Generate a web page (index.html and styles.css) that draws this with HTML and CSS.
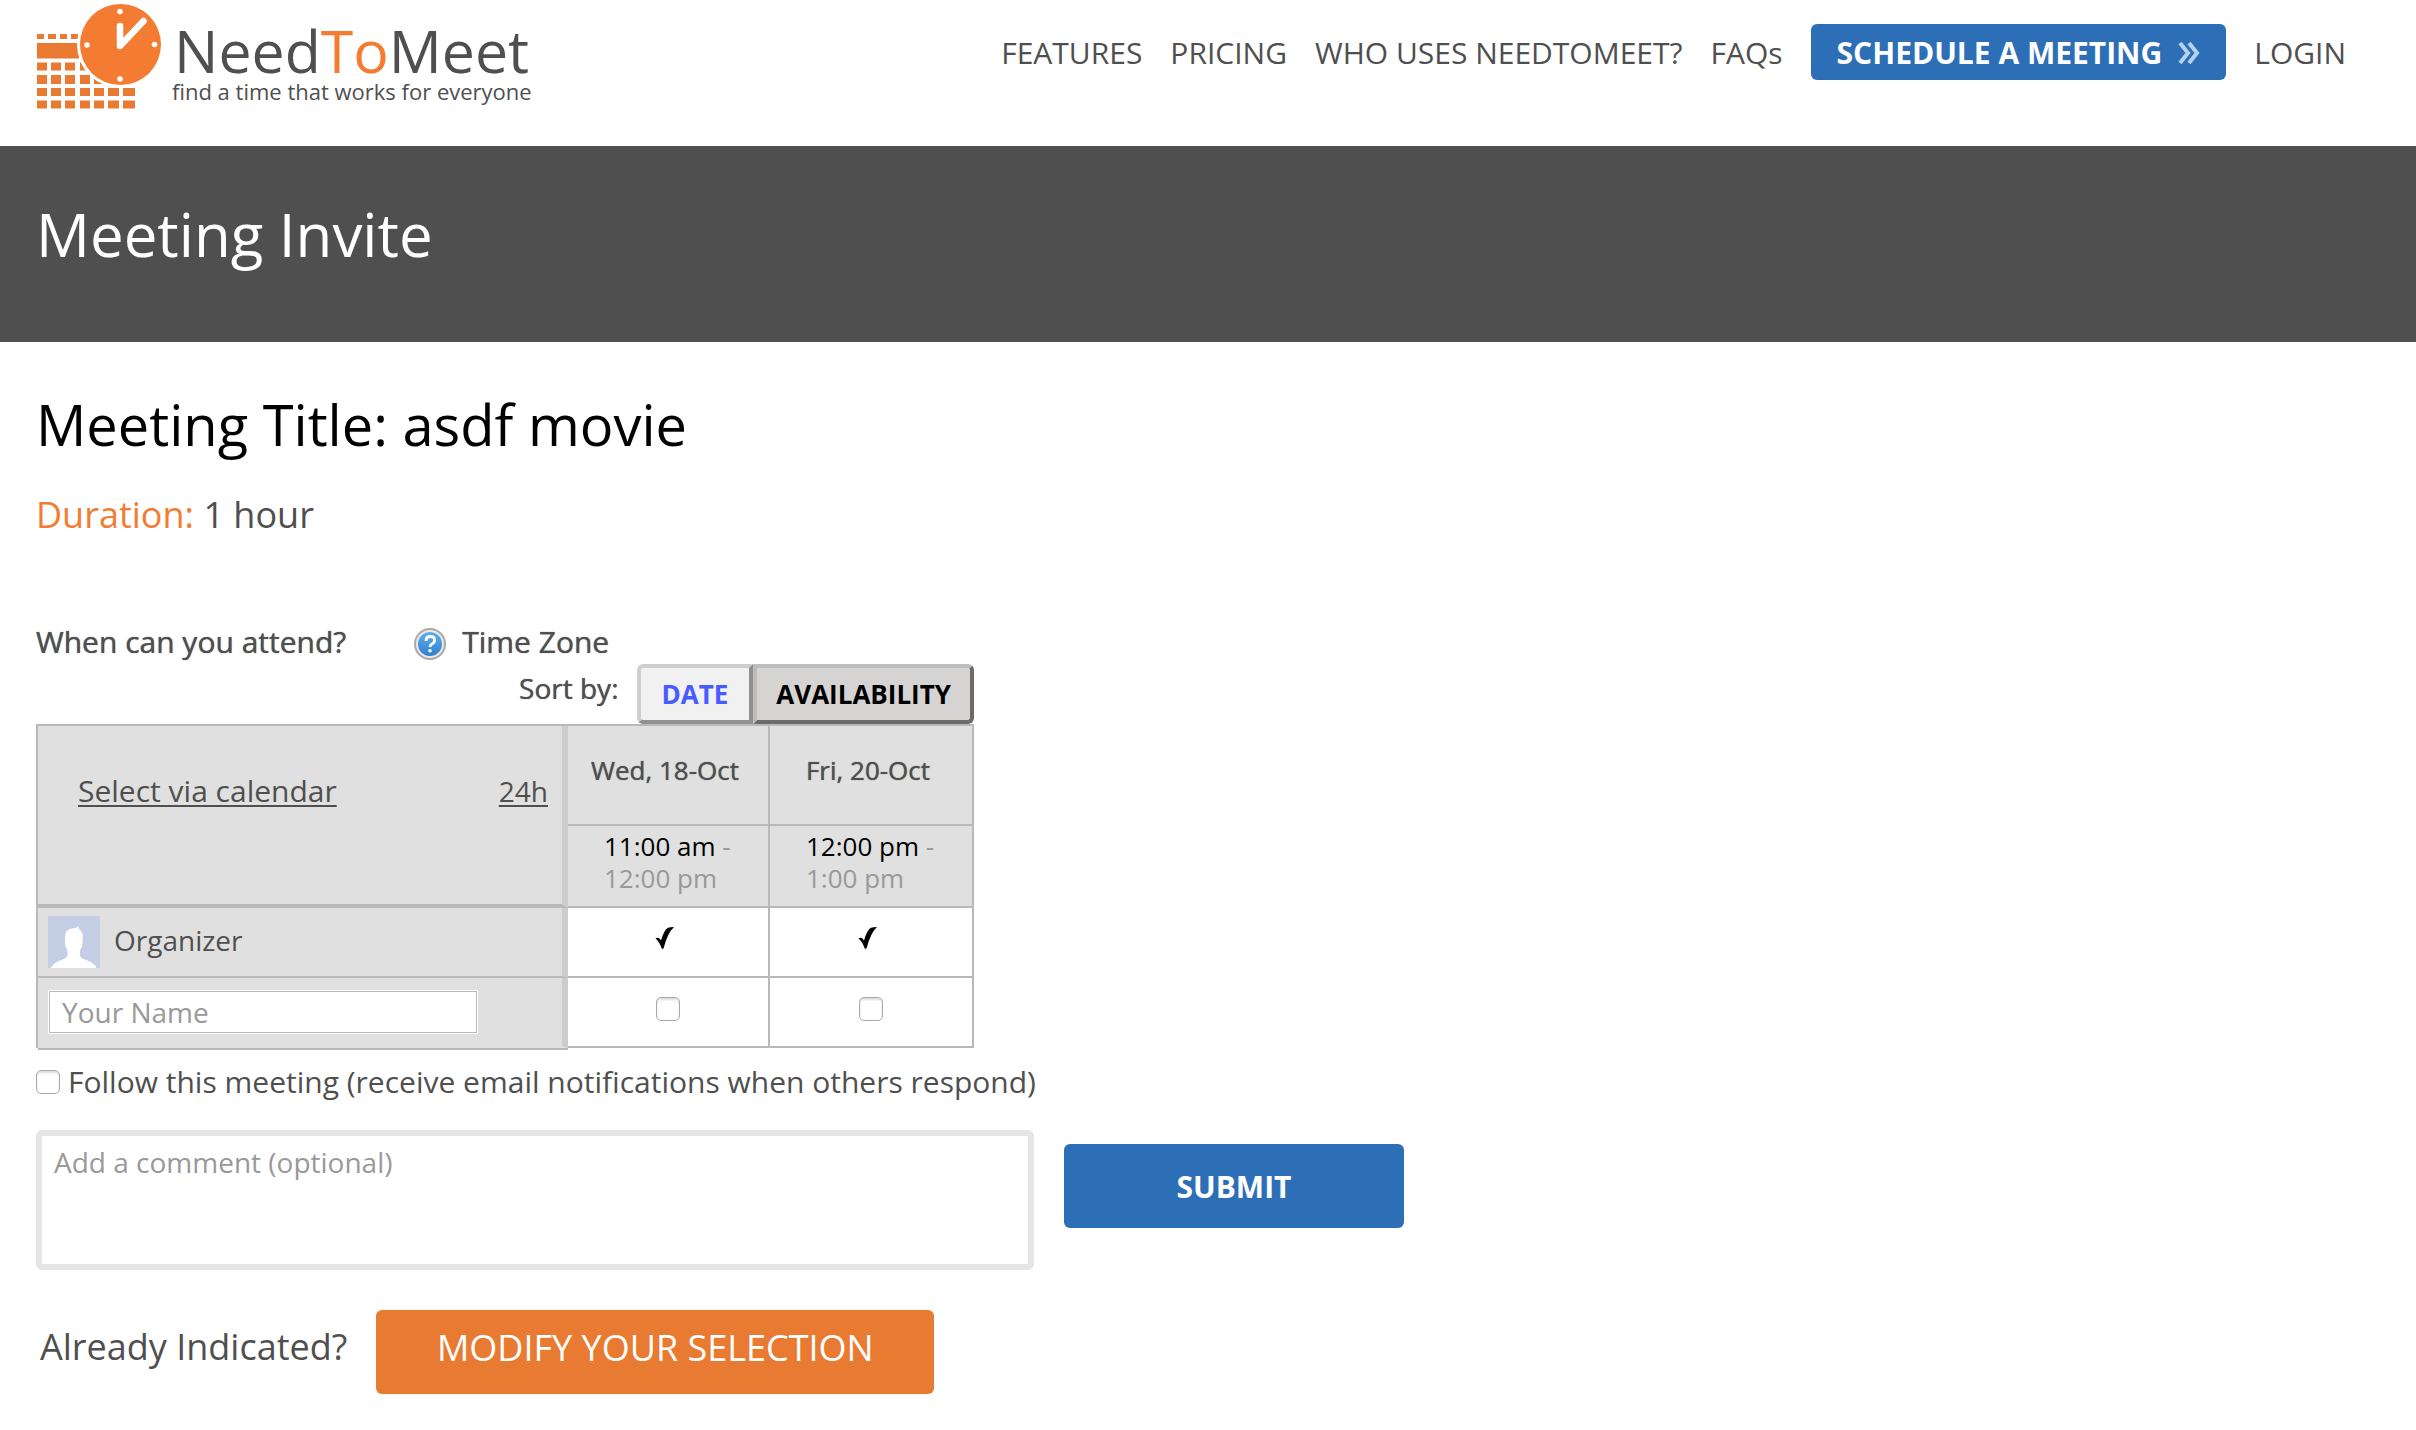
FILE: index.html
```html
<!DOCTYPE html>
<html lang="en">
<head>
<meta charset="utf-8">
<title>NeedToMeet - Meeting Invite</title>
<link rel="stylesheet" href="styles.css">
</head>
<body>
<header class="site-header">
  <a class="brand" href="#">
    <svg class="brand-mark" viewBox="0 0 126 106" aria-hidden="true">
      <g fill="#ea7a31">
        <path d="M1 30h7v5H1zM12 30h8v5h-8zM24 30h7v5h-7zM35 30h7v5h-7zM1 39h42v15.500H1z"/>
        <path d="M1 58.500h10v8H1zM15 58.500h10v8H15zM29 58.500h10v8H29zM44 58.500h10v8H44z"/>
        <path d="M1 71h10v9H1zM15 71h10v9H15zM29 71h10v9H29zM44 71h10v9H44zM58 71h10v9H58z"/>
        <path d="M1 84h10v8H1zM15 84h10v8H15zM29 84h10v8H29zM44 84h10v8H44zM58 84h10v8H58zM72 84h11v8H72zM87 84h12v8H87z"/>
        <path d="M1 96.500h10v8H1zM15 96.500h10v8H15zM29 96.500h10v8H29zM44 96.500h10v8H44zM58 96.500h10v8H58zM72 96.500h11v8H72zM87 96.500h12v8H87z"/>
      </g>
      <circle cx="84.500" cy="40.500" r="43.500" fill="#fff"/>
      <circle cx="84.500" cy="40.500" r="40.500" fill="#f37b32"/>
      <g fill="#fff"><circle cx="84" cy="7.500" r="2.800"/><circle cx="51" cy="41" r="2.800"/><circle cx="118.500" cy="40.500" r="2.800"/><circle cx="84" cy="75" r="2.800"/></g>
      <path d="M84 22v20l23.500-25" fill="none" stroke="#fff" stroke-width="6.500" stroke-linecap="round" stroke-linejoin="round"/>
    </svg>
    <span class="brand-text">
      <span class="brand-name">Need<span class="brand-accent">To</span>Meet</span>
      <span class="brand-tagline">find a time that works for everyone</span>
    </span>
  </a>
  <nav class="main-nav">
    <a href="#">FEATURES</a>
    <a href="#">PRICING</a>
    <a href="#">WHO USES NEEDTOMEET?</a>
    <a href="#">FAQs</a>
    <a class="schedule" href="#">SCHEDULE A MEETING
      <svg class="chevrons" viewBox="0 0 22 22" aria-hidden="true"><path d="M2 1l8 10-8 10M11 1l8 10-8 10" fill="none" stroke="#b9d0ea" stroke-width="4"/></svg>
    </a>
    <a href="#">LOGIN</a>
  </nav>
</header>
<div class="banner"><h1>Meeting Invite</h1></div>
<main class="content">
  <h2>Meeting Title: asdf movie</h2>
  <p class="duration"><span class="label">Duration:</span> 1 hour</p>
  <form class="poll">
    <div class="poll-head">
      <span class="question">When can you attend?</span>
      <a class="timezone" href="#">
        <svg class="help" viewBox="0 0 32 32" aria-hidden="true">
          <defs><linearGradient id="blue" x2="0" y2="1"><stop offset="0" stop-color="#5fb0ea"/><stop offset="1" stop-color="#2f7fd0"/></linearGradient></defs>
          <circle cx="16" cy="16" r="15" fill="#e9e9e9" stroke="#a9a9a9" stroke-width="2"/>
          <circle cx="16" cy="16" r="12" fill="url(#blue)"/>
          <path d="M12 13q0-4.500 4.300-4.500t4.300 3.700q0 2.300-2.300 3.500t-2.100 3.300" fill="none" stroke="#fff" stroke-width="2.800"/>
          <circle cx="16" cy="22.800" r="1.800" fill="#fff"/>
        </svg>
        Time Zone</a>
    </div>
    <div class="sort">
      <span class="sort-label">Sort by:</span>
      <div class="sort-buttons"><button type="button" class="by-date">DATE</button><button type="button" class="by-avail">AVAILABILITY</button></div>
    </div>
    <table class="grid">
      <colgroup><col class="col-name"><col class="col-slot"><col></colgroup>
      <thead>
        <tr class="dates">
          <th class="tools" rowspan="2"><div class="tool-links"><a href="#">Select via calendar</a><a class="clock-mode" href="#">24h</a></div></th>
          <th>Wed, 18-Oct</th>
          <th>Fri, 20-Oct</th>
        </tr>
        <tr class="times">
          <th><span class="start">11:00 am</span> -<br>12:00 pm</th>
          <th><span class="start">12:00 pm</span> -<br>1:00 pm</th>
        </tr>
      </thead>
      <tbody>
        <tr class="person">
          <th scope="row"><div class="who">
            <svg class="avatar" viewBox="0 0 52 52" aria-hidden="true"><path fill="#c4cfe5" d="M0 0h52v52H0z"/><path fill="#fff" d="M3 52q2-5 9-7.500 7-2.500 7.500-4.500.5-4-.5-7-2-2-2-6 0-9 1-11 3-4 10-4l2-2 1 3q3 2 3.500 5 .5 4 0 9 0 4-2 6-1 3-.5 7 .5 2 7.500 4.500 7 2.500 9 7.500z"/></svg>
            <span>Organizer</span></div></th>
          <td><svg class="tick" viewBox="0 0 20 22" role="img" aria-label="Available"><path d="M.5 11.500q3.500-2 5.500 2Q9 3 13 .8q2-.8 6-.8-6.500 6-10.500 21.500l-1.500.5Q4 14 .5 11.500z"/></svg></td>
          <td><svg class="tick" viewBox="0 0 20 22" role="img" aria-label="Available"><path d="M.5 11.500q3.500-2 5.500 2Q9 3 13 .8q2-.8 6-.8-6.500 6-10.500 21.500l-1.500.5Q4 14 .5 11.500z"/></svg></td>
        </tr>
        <tr class="entry">
          <th scope="row"><input class="name" type="text" placeholder="Your Name" aria-label="Your Name"></th>
          <td><input class="box" type="checkbox" aria-label="Wed, 18-Oct 11:00 am"></td>
          <td><input class="box" type="checkbox" aria-label="Fri, 20-Oct 12:00 pm"></td>
        </tr>
      </tbody>
    </table>
    <label class="follow"><input class="box" type="checkbox">Follow this meeting (receive email notifications when others respond)</label>
    <div class="send">
      <textarea class="comment" placeholder="Add a comment (optional)" aria-label="Comment"></textarea>
      <button type="submit" class="submit">SUBMIT</button>
    </div>
    <div class="modify-row">
      <span>Already Indicated?</span>
      <button type="button" class="modify">MODIFY YOUR SELECTION</button>
    </div>
  </form>
</main>
</body>
</html>
```
FILE: styles.css
```css
* { box-sizing: border-box; }
body { margin: 0; background: #fff; color: #4f4f4f; font-family: "Open Sans", "Liberation Sans", sans-serif; font-size: 30px; line-height: 40px; }
a { color: inherit; text-decoration: none; }
button, input, textarea { font-family: inherit; }

.site-header { display: flex; justify-content: space-between; align-items: flex-start; height: 146px; padding: 4px 70px 0 36px; }
.brand { display: flex; }
.brand-mark { width: 126px; height: 106px; }
.brand-text { display: flex; flex-direction: column; padding-left: 10px; }
.brand-name { font-size: 59px; line-height: 60px; padding: 16px 0 0 2px; }
.brand-accent { color: #f37b32; }
.brand-tagline { font-size: 22px; line-height: 22px; }
.main-nav { display: flex; align-items: center; gap: 28px; padding-top: 20px; line-height: 42px; }
.main-nav a { padding-top: 2px; }
.main-nav .schedule { display: flex; align-items: center; gap: 16px; height: 56px; padding: 2px 26px 0; border-radius: 6px; background: #2d6fb7; color: #fff; font-weight: 700; }
.chevrons { width: 22px; height: 22px; }

.banner { height: 196px; padding: 48px 36px; background: #4f4f4f; color: #fff; }
h1, h2 { margin: 0; font-weight: 400; line-height: 80px; }
h1 { font-size: 60px; }
h2 { font-size: 56px; color: #000; }

.content { padding: 42px 36px; }
.duration { margin: 26px 0 0; font-size: 36px; line-height: 50px; }
.duration .label { color: #f37b32; }

.poll { margin-top: 82px; }
.poll-head { display: flex; gap: 68px; text-shadow: 0 0 1px #4f4f4f; }
.timezone { display: flex; align-items: center; gap: 16px; }
.help { width: 32px; height: 32px; margin-top: 4px; }
.sort { display: flex; justify-content: flex-end; width: 938px; gap: 18px; margin-top: 2px; font-size: 28px; }
.sort-label { padding-top: 4px; text-shadow: 0 0 1px #4f4f4f; }
.sort-buttons { display: flex; }
.sort-buttons button { height: 60px; border: 4px solid; font-size: 26px; font-weight: 700; line-height: 40px; }
.sort-buttons .by-date { padding: 0 21px; border-color: #cfcfcf #909090 #909090 #cfcfcf; border-radius: 6px 0 0 6px; background: #f1f1f1; color: #485bff; }
.sort-buttons .by-avail { padding: 0 19px; border-color: #bdbdbd #6b6b6b #6b6b6b #bdbdbd; border-radius: 0 6px 6px 0; background: #d6d4d2; color: #000; }

.grid { width: 938px; border-spacing: 0; table-layout: fixed; border-top: 2px solid #b9b9b9; border-left: 2px solid #b9b9b9; }
.col-name { width: 530px; }
.col-slot { width: 202px; }
.grid th, .grid td { padding: 0; border-right: 2px solid #b9b9b9; border-bottom: 2px solid #b9b9b9; font-weight: 400; text-align: center; }
.grid th { background: #e0e0e0; }
.grid th.tools, .grid tbody th { border-right: 6px solid #cdcdcd; text-align: left; }
.grid th.tools { border-bottom-width: 4px; vertical-align: top; }
.dates th { height: 100px; font-size: 26px; }
.grid .dates th:not(.tools) { padding: 0 6px 10px 0; text-shadow: 0 0 1px #4f4f4f; }
.tool-links { display: flex; justify-content: space-between; padding: 45px 14px 0 40px; font-size: 30px; }
.tool-links a { text-decoration: underline; text-decoration-thickness: 2px; text-underline-offset: 3px; }
.tool-links .clock-mode { font-size: 28px; }
.grid .times th { height: 82px; padding: 0 0 8px 36px; font-size: 26px; line-height: 32px; text-align: left; color: #999; }
.start { color: #000; }
.person th, .person td { height: 70px; font-size: 28px; }
.grid .person td { padding: 0 6px 8px 0; }
.who { display: flex; gap: 14px; padding-left: 10px; }
.who span { padding-top: 4px; }
.avatar { width: 52px; height: 52px; }
.tick { width: 20px; height: 22px; }
.entry th, .entry td { height: 70px; }
.grid .entry td { padding-bottom: 4px; }
.grid .entry th { border-bottom-color: #e0e0e0; box-shadow: 0 2px #b9b9b9; }
.name { display: block; width: 430px; height: 44px; margin-left: 10px; padding: 2px 13px; border: 1px solid #fff; background: #fff; box-shadow: inset 0 0 0 1px #b9b9b9; font-size: 28px; color: #4f4f4f; }
::placeholder { color: #999; opacity: 1; }
.box { appearance: none; width: 24px; height: 24px; margin: 0; border: 1px solid #a9a9a9; border-radius: 5px; background: #fff; box-shadow: inset 0 2px 2px #ddd; }

.follow { display: flex; align-items: center; gap: 8px; margin-top: 14px; }
.send { display: flex; align-items: flex-start; gap: 30px; margin-top: 28px; }
.comment { width: 998px; height: 140px; padding: 6px 12px; border: 6px solid #e5e5e5; border-radius: 6px; font-size: 28px; line-height: 40px; resize: none; }
.submit { width: 340px; height: 84px; margin-top: 14px; border: 0; border-radius: 6px; background: #2d6fb7; color: #fff; font-size: 30px; font-weight: 700; }
.modify-row { display: flex; gap: 29px; margin-top: 40px; padding-left: 4px; font-size: 36px; line-height: 74px; }
.modify { width: 558px; height: 84px; padding: 0 0 10px; border: 0; border-radius: 6px; background: #e97a32; color: #fff; font-size: 36px; }
```
